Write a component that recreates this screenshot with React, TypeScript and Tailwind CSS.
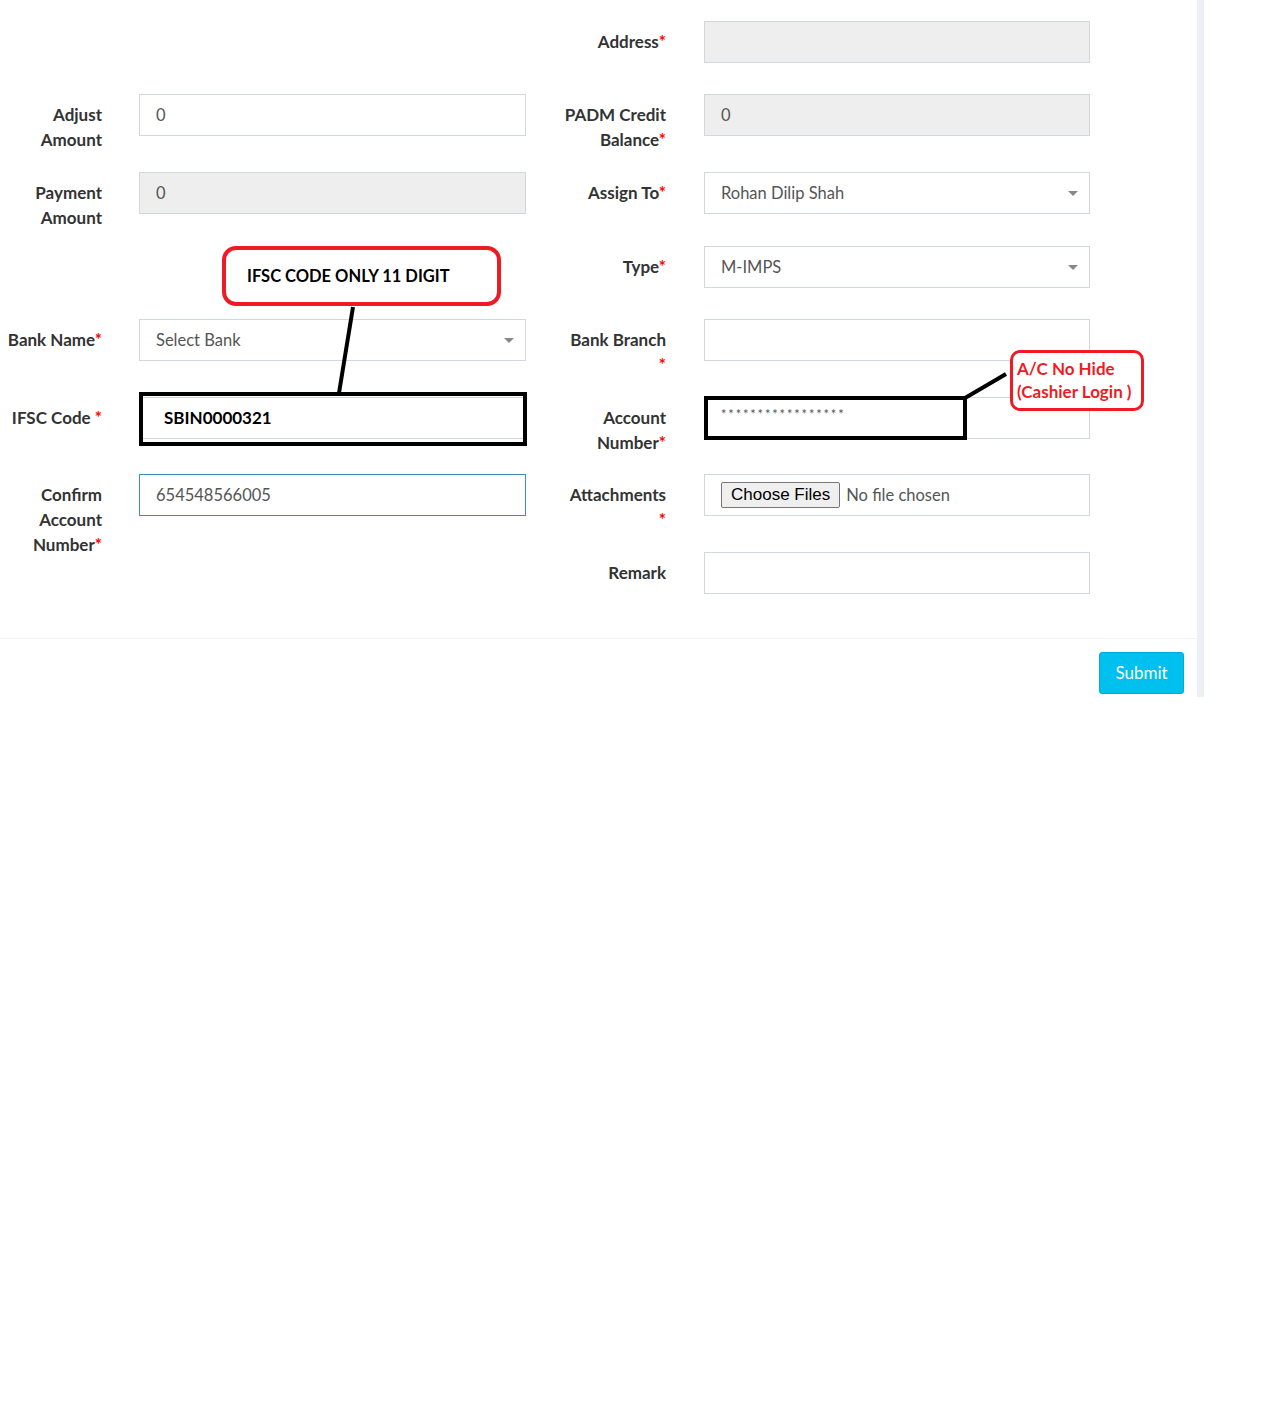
const font = { fontFamily: "Lato, 'Open Sans', sans-serif" };

function Star() {
  return <span className="text-[#ff0000]">*</span>;
}

function Label({ children, width }: { children: React.ReactNode; width: string }) {
  return (
    <div className={`${width} shrink-0 pt-[8px] text-right text-[17px] font-bold leading-[25px] text-[#333]`}>
      {children}
    </div>
  );
}

function Box({
  children,
  disabled,
  focus,
  select,
  width,
}: {
  children?: React.ReactNode;
  disabled?: boolean;
  focus?: boolean;
  select?: boolean;
  width: string;
}) {
  return (
    <div
      className={`${width} relative flex h-[42px] shrink-0 items-center border px-4 text-[16.5px] text-[#555] ${
        disabled ? "bg-[#eeeeee]" : "bg-white"
      } ${focus ? "border-[#3c8dbc]" : "border-[#d2d6de]"}`}
    >
      {children}
      {select ? (
        <span className="absolute right-[11px] top-[18px] h-0 w-0 border-x-[5px] border-t-[5px] border-x-transparent border-t-[#888]" />
      ) : null}
    </div>
  );
}

function Row({
  height,
  left,
  right,
}: {
  height: string;
  left?: React.ReactNode;
  right?: React.ReactNode;
}) {
  return (
    <div className={`flex ${height}`}>
      <div className="w-[526px] shrink-0">{left}</div>
      <div className="w-[564px] shrink-0">{right}</div>
    </div>
  );
}

function LeftField({ label, children }: { label: React.ReactNode; children: React.ReactNode }) {
  return (
    <div className="flex items-start gap-[37px]">
      <Label width="w-[102px]">{label}</Label>
      {children}
    </div>
  );
}

function RightField({ label, children }: { label: React.ReactNode; children: React.ReactNode }) {
  return (
    <div className="flex items-start gap-[38px]">
      <Label width="w-[140px]">{label}</Label>
      {children}
    </div>
  );
}

export default function App() {
  return (
    <div className="min-h-[1424px] bg-white" style={font}>
      <div className="flex h-[697px] w-[1204px] bg-[#ecf0f5]">
        <div className="relative flex w-[1197px] flex-col bg-white">
          <div className="flex flex-col pt-[21px]">
            <Row
              height="h-[73px]"
              right={
                <RightField label={<>Address<Star /></>}>
                  <Box width="w-[386px]" disabled />
                </RightField>
              }
            />
            <Row
              height="h-[78px]"
              left={
                <LeftField label={<>Adjust<br />Amount</>}>
                  <Box width="w-[387px]">0</Box>
                </LeftField>
              }
              right={
                <RightField label={<>PADM Credit<br />Balance<Star /></>}>
                  <Box width="w-[386px]" disabled>0</Box>
                </RightField>
              }
            />
            <Row
              height="h-[74px]"
              left={
                <LeftField label={<>Payment<br />Amount</>}>
                  <Box width="w-[387px]" disabled>0</Box>
                </LeftField>
              }
              right={
                <RightField label={<>Assign To<Star /></>}>
                  <Box width="w-[386px]" select>Rohan Dilip Shah</Box>
                </RightField>
              }
            />
            <Row
              height="h-[73px]"
              right={
                <RightField label={<>Type<Star /></>}>
                  <Box width="w-[386px]" select>M-IMPS</Box>
                </RightField>
              }
            />
            <Row
              height="h-[78px]"
              left={
                <LeftField label={<>Bank Name<Star /></>}>
                  <Box width="w-[387px]" select>Select Bank</Box>
                </LeftField>
              }
              right={
                <RightField label={<>Bank Branch<br /><Star /></>}>
                  <Box width="w-[386px]" />
                </RightField>
              }
            />
            <Row
              height="h-[77px]"
              left={
                <LeftField label={<>IFSC Code <Star /></>}>
                  <Box width="w-[387px]">
                    <span className="pl-2 text-[17px] font-bold text-black">SBIN0000321</span>
                  </Box>
                </LeftField>
              }
              right={
                <RightField label={<>Account<br />Number<Star /></>}>
                  <Box width="w-[386px]">
                    <span className="-mt-[6px] text-[13px] tracking-[1.8px]">*****************</span>
                  </Box>
                </RightField>
              }
            />
            <Row
              height="h-[78px]"
              left={
                <LeftField label={<>Confirm<br />Account<br />Number<Star /></>}>
                  <Box width="w-[387px]" focus>654548566005</Box>
                </LeftField>
              }
              right={
                <RightField label={<>Attachments<br /><Star /></>}>
                  <Box width="w-[386px]">
                    <span
                      className="rounded-[2px] border border-[#767676] bg-[#efefef] px-[9px] text-[17px] leading-[24px] text-black"
                      style={{ fontFamily: "'Liberation Sans', Arial, sans-serif" }}
                    >
                      Choose Files
                    </span>
                    <span className="ml-[6px]">No file chosen</span>
                  </Box>
                </RightField>
              }
            />
            <Row
              height="h-[86px]"
              right={
                <RightField label="Remark">
                  <Box width="w-[386px]" />
                </RightField>
              }
            />
          </div>

          <div className="flex justify-end border-t border-[#f4f4f4] pr-[13px] pt-[13px]">
            <button className="h-[42px] w-[85px] rounded-[3px] border border-[#00acd6] bg-[#00c0ef] text-[17px] text-white">
              Submit
            </button>
          </div>

          {/* annotations drawn over the form */}
          <div className="absolute left-[222px] top-[246px] flex h-[60px] w-[279px] items-center rounded-[14px] border-4 border-[#ed1c24] bg-white pl-[21px] text-[16.5px] font-bold text-black">
            IFSC CODE ONLY 11 DIGIT
          </div>
          <div className="absolute left-[139px] top-[392px] h-[54px] w-[388px] border-4 border-black" />
          <div className="absolute left-[704px] top-[396px] h-[44px] w-[263px] border-4 border-black" />
          <div className="absolute left-[1010px] top-[350px] h-[61px] w-[134px] rounded-[10px] border-[3px] border-[#ed1c24] bg-white pl-[4px] pt-[4px] text-[17px] font-bold leading-[23px] text-[#ed1c24]">
            A/C No Hide
            <br />
            (Cashier Login )
          </div>
          <svg className="pointer-events-none absolute left-0 top-0" width="1197" height="697">
            <line x1="353" y1="307" x2="339" y2="393" stroke="black" strokeWidth="4" />
            <line x1="965" y1="398" x2="1006" y2="374" stroke="black" strokeWidth="4" />
          </svg>
        </div>
      </div>
    </div>
  );
}
